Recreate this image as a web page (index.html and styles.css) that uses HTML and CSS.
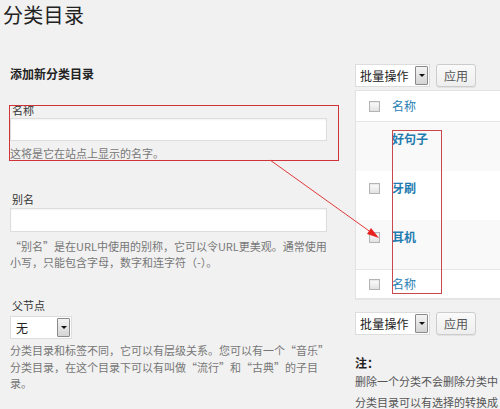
FILE: index.html
```html
<!DOCTYPE html>
<html lang="zh-CN">
<head>
<meta charset="utf-8">
<title>分类目录</title>
<link rel="stylesheet" href="styles.css">
</head>
<body>
<div class="page">
  <h1 class="title">分类目录</h1>
  <div class="cols">
    <div class="form-col">
      <h3 class="form-title">添加新分类目录</h3>
      <div class="field field-name">
        <div class="label">名称</div>
        <div class="input"></div>
        <p class="hint">这将是它在站点上显示的名字。</p>
      </div>
      <div class="field field-slug">
        <div class="label">别名</div>
        <div class="input input-slug"></div>
        <p class="hint">“别名”是在URL中使用的别称，它可以令URL更美观。通常使用<br>小写，只能包含字母，数字和连字符（-）。</p>
      </div>
      <div class="field field-parent">
        <div class="label">父节点</div>
        <div class="select select-parent"><span class="select-text">无</span><span class="select-btn"><span class="tri"></span></span></div>
        <p class="hint hint-parent">分类目录和标签不同，它可以有层级关系。您可以有一个“音乐”<br>分类目录，在这个目录下可以有叫做“流行”和“古典”的子目<br>录。</p>
      </div>
    </div>
    <div class="list-col">
      <div class="tablenav tablenav-top">
        <div class="select select-bulk"><span class="select-text">批量操作</span><span class="select-btn"><span class="tri"></span></span></div>
        <div class="button">应用</div>
      </div>
      <div class="table">
        <div class="row row-head">
          <span class="cb"><span class="checkbox"></span></span>
          <span class="name link">名称</span>
        </div>
        <div class="row row-item alt">
          <span class="cb"></span>
          <span class="name link strong">好句子</span>
        </div>
        <div class="row row-item">
          <span class="cb"><span class="checkbox"></span></span>
          <span class="name link strong">牙刷</span>
        </div>
        <div class="row row-item alt">
          <span class="cb"><span class="checkbox"></span></span>
          <span class="name link strong">耳机</span>
        </div>
        <div class="row row-foot">
          <span class="cb"><span class="checkbox"></span></span>
          <span class="name link">名称</span>
        </div>
      </div>
      <div class="tablenav tablenav-bottom">
        <div class="select select-bulk"><span class="select-text">批量操作</span><span class="select-btn"><span class="tri"></span></span></div>
        <div class="button">应用</div>
      </div>
      <div class="note">
        <p class="note-title">注：</p>
        <p class="note-line">删除一个分类不会删除分类中</p>
        <p class="note-line note-line2">分类目录可以有选择的转换成</p>
      </div>
    </div>
  </div>
  <div class="mark-box mark-left"></div>
  <div class="mark-box mark-right"></div>
  <svg class="arrow" width="500" height="409" viewBox="0 0 500 409" xmlns="http://www.w3.org/2000/svg">
    <line x1="270" y1="160" x2="372" y2="233" stroke="#e0393b" stroke-width="1"/>
    <polygon points="379,238 367,234 371,228" fill="#e8221f"/>
  </svg>
</div>
</body>
</html>
```

FILE: styles.css
```css
html, body {
  margin: 0;
  padding: 0;
}
body {
  background: #f1f1f1;
  font-family: "Noto Sans CJK SC", "Noto Sans", sans-serif;
  font-size: 12px;
  color: #333;
  overflow: hidden;
}
.page {
  position: relative;
  width: 500px;
  height: 409px;
  overflow: hidden;
}
.title {
  margin: 0;
  padding: 1px 0 0 3px;
  height: 29px;
  font-size: 20px;
  line-height: 28px;
  font-weight: normal;
  color: #222;
  letter-spacing: 0.3px;
}
.cols {
  display: flex;
  align-items: flex-start;
}
.form-col {
  margin-left: 10px;
  width: 317px;
  flex: none;
}
.form-title {
  margin: 36px 0 0 0;
  font-size: 12px;
  line-height: 16px;
  font-weight: bold;
  color: #222;
}
.label {
  font-size: 11px;
  line-height: 14px;
  color: #333;
  padding-left: 2px;
}
.field-name {
  margin-top: 21px;
}
.input {
  margin-top: 1px;
  height: 21px;
  background: #fff;
  border: 1px solid #ddd;
  box-shadow: inset 0 1px 2px rgba(0,0,0,0.05);
}
.hint {
  margin: 4px 0 0 0;
  font-size: 11px;
  line-height: 16px;
  color: #777;
  white-space: nowrap;
}
.field-slug {
  margin-top: 31px;
}
.input-slug {
  margin-top: 2px;
  height: 22px;
}
.field-slug .hint {
  margin-top: 6px;
}
.field-parent {
  margin-top: 28px;
}
.select {
  display: flex;
  align-items: stretch;
  background: #fff;
  border: 1px solid #ddd;
  box-sizing: border-box;
}
.select-parent {
  margin-top: 4px;
  width: 62px;
  height: 23px;
}
.select-text {
  flex: 1;
  font-size: 12px;
  line-height: 21px;
  padding-left: 5px;
  color: #222;
}
.select-btn {
  width: 11px;
  margin: 1px 1px 1px 0;
  border: 1px solid #8a8a8a;
  border-radius: 1px;
  background: linear-gradient(#f4f4f4, #d4d4d4);
  display: flex;
  align-items: center;
  justify-content: center;
}
.tri {
  width: 0;
  height: 0;
  border-left: 3px solid transparent;
  border-right: 3px solid transparent;
  border-top: 3px solid #111;
}
.hint-parent {
  margin-top: 3px;
  line-height: 16.5px;
}
.list-col {
  margin-left: 28px;
  width: 200px;
  flex: none;
}
.tablenav {
  display: flex;
  align-items: flex-start;
  gap: 6px;
}
.tablenav-top {
  margin-top: 34px;
}
.select-bulk {
  width: 75px;
  height: 23px;
}
.select-bulk .select-text {
  font-size: 12px;
  padding-left: 4px;
  letter-spacing: 0.2px;
}
.button {
  width: 40px;
  height: 23px;
  box-sizing: border-box;
  border: 1px solid #ccc;
  border-radius: 3px;
  background: linear-gradient(#fafafa, #eeeeee);
  box-shadow: 0 1px 0 rgba(0,0,0,0.06);
  font-size: 12px;
  line-height: 21px;
  text-align: center;
  color: #555;
}
.table {
  margin-top: 3px;
  background: #fff;
  border: 1px solid #e3e3e3;
  border-right: none;
  box-shadow: 0 1px 1px rgba(0,0,0,0.04);
}
.row {
  display: flex;
  align-items: flex-start;
  box-sizing: border-box;
}
.row-head {
  height: 31px;
  align-items: center;
  border-bottom: 1px solid #e6e6e6;
}
.row-item {
  height: 49px;
  padding-top: 9px;
}
.row-foot {
  height: 29px;
  align-items: center;
  border-top: 1px solid #e6e6e6;
}
.alt {
  background: #f9f9f9;
}
.cb {
  width: 36px;
  flex: none;
  display: flex;
  justify-content: center;
  padding-left: 1px;
  box-sizing: border-box;
}
.row-item .cb {
  padding-top: 3px;
}
.checkbox {
  width: 9px;
  height: 9px;
  border: 1px solid #b4b4b4;
  background: linear-gradient(#fdfdfd, #e2e2e2);
  box-shadow: inset 0 1px 1px rgba(0,0,0,0.08);
}
.name {
  font-size: 12px;
  line-height: 16px;
}
.link {
  color: #2a80b3;
}
.strong {
  font-weight: bold;
  color: #1f7bb0;
}
.tablenav-bottom {
  margin-top: 13px;
}
.note {
  margin-top: 19px;
  width: 145px;
}
.note p {
  margin: 0;
  white-space: nowrap;
}
.note-title {
  font-size: 12px;
  font-weight: bold;
  line-height: 18px;
  color: #222;
}
.note-line {
  font-size: 11px;
  line-height: 18px;
  color: #555;
}
.note-line2 {
  margin-top: 3px !important;
}
.mark-box {
  position: absolute;
  border: 1px solid #d0343a;
  box-sizing: border-box;
}
.mark-left {
  left: 9px;
  top: 105px;
  width: 330px;
  height: 56px;
}
.mark-right {
  left: 392px;
  top: 130px;
  width: 50px;
  height: 164px;
  border-color: #c9484d;
}
.arrow {
  position: absolute;
  left: 0;
  top: 0;
  pointer-events: none;
}
```
